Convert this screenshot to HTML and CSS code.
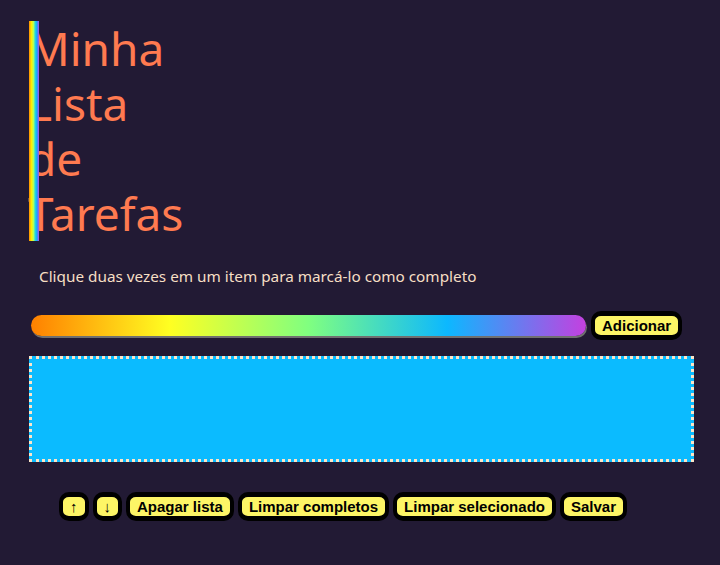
FILE: index.html
```html
<!DOCTYPE html>
<html lang="pt">
<head>
<meta charset="utf-8">
<title>Minha Lista de Tarefas</title>
<link rel="stylesheet" href="styles.css">
</head>
<body>
<main class="app">
  <h1 class="title">Minha Lista de Tarefas</h1>
  <p class="hint">Clique duas vezes em um item para marcá-lo como completo</p>
  <div class="add-row">
    <input class="task-input" type="text" aria-label="Nova tarefa">
    <button class="btn">Adicionar</button>
  </div>
  <ul class="task-list"></ul>
  <div class="actions">
    <button class="btn">↑</button>
    <button class="btn">↓</button>
    <button class="btn">Apagar lista</button>
    <button class="btn">Limpar completos</button>
    <button class="btn">Limpar selecionado</button>
    <button class="btn">Salvar</button>
  </div>
</main>
</body>
</html>
```

FILE: styles.css
```css
html, body {
  margin: 0;
  padding: 0;
}

body {
  background: #221a34;
  font-family: "Noto Sans", "DejaVu Sans", sans-serif;
}

.app {
  padding: 21px 26px 0 29px;
  display: flex;
  flex-direction: column;
  align-items: flex-start;
}

.title {
  position: relative;
  margin: 0 0 0 -1px;
  padding: 0;
  width: min-content;
  font-size: 46px;
  font-weight: 400;
  line-height: 55px;
  color: #ff7a50;
}

.title::before {
  content: "";
  position: absolute;
  left: 1px;
  top: 0;
  bottom: 0;
  width: 10px;
  background: linear-gradient(to right, #ff8c00, #ffee00 25%, #b0ff60 45%, #20d8e0 62%, #1aa0ff 80%, #b050e8);
}

.hint {
  margin: 25px 0 25px 10px;
  font-size: 15.3px;
  line-height: 20px;
  color: #f6dfc4;
}

.add-row {
  display: flex;
  align-items: center;
  gap: 5px;
}

.task-input {
  width: 555px;
  height: 21px;
  margin: 0 0 0 2px;
  padding: 0;
  border: none;
  border-radius: 11px;
  box-sizing: border-box;
  background: linear-gradient(to right, #ff8000, #ffff22 25%, #80ff80 50%, #0cb8ff 75%, #c440e0);
  box-shadow: 1px 2px 0 #707070;
  outline: none;
}

.btn {
  font-family: "Liberation Sans", Arial, sans-serif;
  font-weight: 700;
  font-size: 15px;
  line-height: 17px;
  color: #000;
  background: #fdf566;
  border-style: solid;
  border-color: #000;
  border-width: 5px 4px;
  border-radius: 10px;
  padding: 1px 7px;
  margin: 0;
  cursor: pointer;
}

.task-list {
  align-self: stretch;
  margin: 16px 0 0;
  padding: 0;
  list-style: none;
  height: 100px;
  background: #0bbbff;
  border: 3px dotted #fde6c8;
}

.actions {
  display: flex;
  gap: 4px;
  margin: 30px 0 0 30px;
}
```
